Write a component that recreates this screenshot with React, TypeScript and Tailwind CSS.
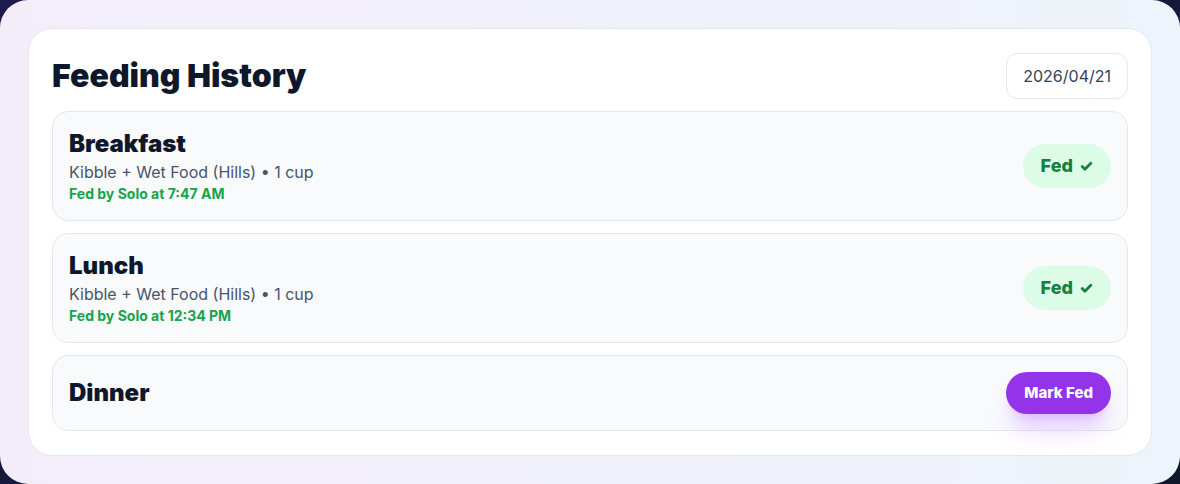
import { Check } from "lucide-react";

type Meal = {
  name: string;
  food?: string;
  fedBy?: string;
  fedAt?: string;
};

const meals: Meal[] = [
  { name: "Breakfast", food: "Kibble + Wet Food (Hills) • 1 cup", fedBy: "Solo", fedAt: "7:47 AM" },
  { name: "Lunch", food: "Kibble + Wet Food (Hills) • 1 cup", fedBy: "Solo", fedAt: "12:34 PM" },
  { name: "Dinner" },
];

function MealRow({ meal }: { meal: Meal }) {
  const fed = Boolean(meal.fedAt);
  return (
    <div className="flex items-center justify-between rounded-2xl border border-slate-200 bg-[#f8fafc] p-4">
      <div className="flex flex-col">
        <h2 className="text-2xl font-black text-[#0f172a]">{meal.name}</h2>
        {meal.food && <p className="text-base text-[#475569]">{meal.food}</p>}
        {fed && (
          <p className="text-sm font-bold text-[#16a34a]">
            Fed by {meal.fedBy} at {meal.fedAt}
          </p>
        )}
      </div>

      {fed ? (
        <span className="flex h-11 items-center gap-[7px] rounded-full bg-[#dcfce7] px-[18px] text-lg font-extrabold text-[#15803d]">
          Fed
          <Check className="h-[13px] w-[13px]" strokeWidth={5} />
        </span>
      ) : (
        <button
          type="button"
          className="h-[42px] rounded-full bg-[#9333ea] px-[18px] text-[15px] font-extrabold text-white shadow-xl shadow-purple-500/25"
        >
          Mark Fed
        </button>
      )}
    </div>
  );
}

export default function App() {
  return (
    <div
      className="min-h-screen bg-gradient-to-br from-indigo-950 to-slate-900"
      style={{ fontFamily: "Inter, 'Noto Sans', sans-serif" }}
    >
      <div className="h-[484px] rounded-[28px] bg-gradient-to-r from-[#f3edfa] to-[#eef4fb] p-7">
        <div className="rounded-3xl border border-slate-200 bg-white px-[23px] py-6">
          <div className="mb-3 flex items-center justify-between">
            <h1 className="text-[32px] leading-9 font-black text-[#0f172a]">Feeding History</h1>
            <div className="rounded-xl border border-slate-200 bg-white px-4 py-3 text-base leading-5 text-[#334155]">
              2026/04/21
            </div>
          </div>

          <div className="flex flex-col gap-3">
            {meals.map((m) => (
              <MealRow key={m.name} meal={m} />
            ))}
          </div>
        </div>
      </div>
    </div>
  );
}
